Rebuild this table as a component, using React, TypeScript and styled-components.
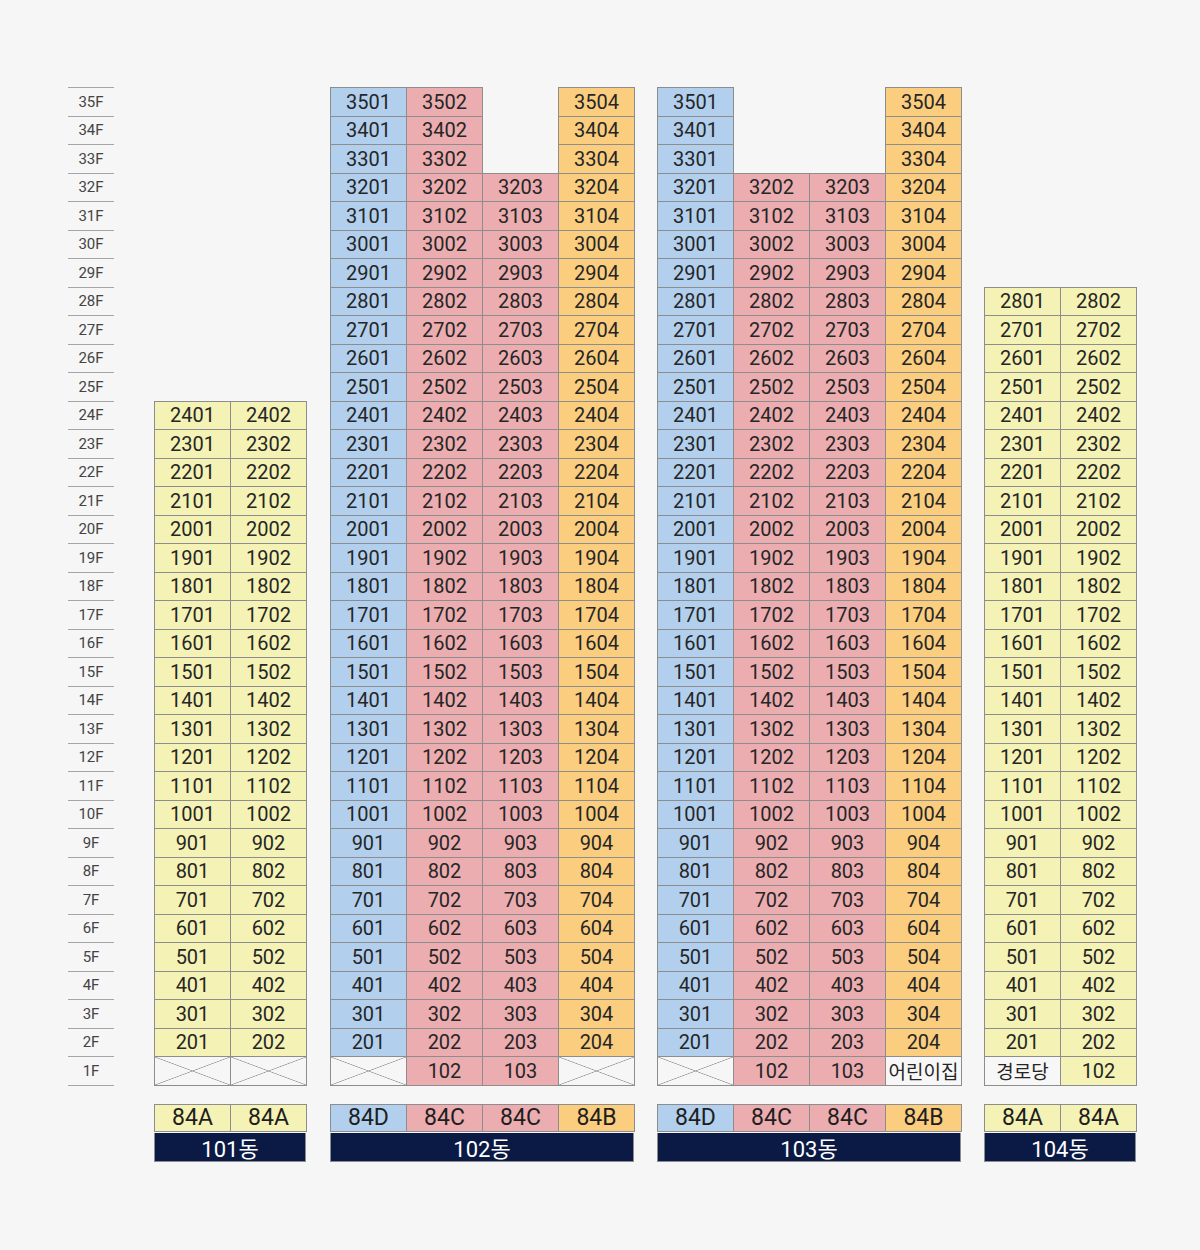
import styled, { createGlobalStyle } from "styled-components";

const GlobalStyle = createGlobalStyle`
  body {
    margin: 0;
    background: #f6f6f6;
    font-family: Roboto, "Noto Sans CJK KR", sans-serif;
  }
`;

const ROW = 28.5;
const COL = 76;
const TOP = 35;

const colors: Record<string, string> = {
  blue: "#b2d0ee",
  pink: "#ebadb0",
  orange: "#fbcd7f",
  yellow: "#f4f2b4",
};

const Page = styled.div`
  width: 1200px;
  height: 1250px;
  box-sizing: border-box;
  padding: 87px 0 0 68px;
  display: flex;
  align-items: flex-start;
`;

const FloorColumn = styled.div`
  width: 46px;
  margin-right: 40px;
  display: flex;
  flex-direction: column;
  border-bottom: 1px solid #a5a5a5;
`;

const FloorLabel = styled.div`
  height: ${ROW}px;
  box-sizing: border-box;
  border-top: 1px solid #a5a5a5;
  display: flex;
  align-items: center;
  justify-content: center;
  font-size: 15px;
  color: #444;
`;

const Building = styled.div<{ $gap: number }>`
  display: flex;
  flex-direction: column;
  margin-right: ${(p) => p.$gap}px;
`;

const Grid = styled.div<{ $cols: number }>`
  display: grid;
  grid-template-columns: repeat(${(p) => p.$cols}, ${COL}px);
  grid-auto-rows: ${ROW}px;
`;

const Cell = styled.div<{ $bg: string }>`
  margin: 0 -1px -1px 0;
  border: 1px solid #8d8d8d;
  background: ${(p) => p.$bg};
  display: flex;
  align-items: center;
  justify-content: center;
  font-size: 20px;
  color: #262626;
`;

const Empty = styled.div``;

const LabelCell = styled(Cell)`
  font-size: 19px;
`;

const Crossed = styled(Cell)`
  background:
    linear-gradient(to top right, transparent calc(50% - 0.7px), #9a9a9a 50%, transparent calc(50% + 0.7px)),
    linear-gradient(to bottom right, transparent calc(50% - 0.7px), #9a9a9a 50%, transparent calc(50% + 0.7px)),
    #f6f6f6;
`;

const Footer = styled.div`
  margin-top: 19px;
  display: flex;
  flex-direction: column;
`;

const TypeCell = styled(Cell)`
  height: 28px;
  box-sizing: border-box;
  font-size: 23px;
  color: #1e1e1e;
`;

const NameBar = styled.div`
  margin-top: 1px;
  height: 29px;
  box-sizing: border-box;
  border: 1px solid #8d8d8d;
  border-top: none;
  background: #0a1a45;
  color: #fff;
  font-size: 22px;
  display: flex;
  align-items: center;
  justify-content: center;
`;

type Column = {
  color: string;
  top: number;
  first: string | null; // 1F: null = crossed out, "unit" = number, else a label
};

type BuildingData = {
  name: string;
  gap: number;
  types: string[];
  columns: Column[];
};

const buildings: BuildingData[] = [
  {
    name: "101동",
    gap: 24,
    types: ["84A", "84A"],
    columns: [
      { color: "yellow", top: 24, first: null },
      { color: "yellow", top: 24, first: null },
    ],
  },
  {
    name: "102동",
    gap: 23,
    types: ["84D", "84C", "84C", "84B"],
    columns: [
      { color: "blue", top: 35, first: null },
      { color: "pink", top: 35, first: "unit" },
      { color: "pink", top: 32, first: "unit" },
      { color: "orange", top: 35, first: null },
    ],
  },
  {
    name: "103동",
    gap: 23,
    types: ["84D", "84C", "84C", "84B"],
    columns: [
      { color: "blue", top: 35, first: null },
      { color: "pink", top: 32, first: "unit" },
      { color: "pink", top: 32, first: "unit" },
      { color: "orange", top: 35, first: "어린이집" },
    ],
  },
  {
    name: "104동",
    gap: 0,
    types: ["84A", "84A"],
    columns: [
      { color: "yellow", top: 28, first: "경로당" },
      { color: "yellow", top: 28, first: "unit" },
    ],
  },
];

const floors = Array.from({ length: TOP }, (_, i) => TOP - i);

const renderCell = (col: Column, idx: number, floor: number) => {
  const key = `${floor}-${idx}`;
  if (floor > col.top) return <Empty key={key} />;
  if (floor === 1) {
    if (col.first === null) return <Crossed key={key} $bg="#f6f6f6" />;
    if (col.first !== "unit")
      return (
        <LabelCell key={key} $bg="#f7f7f7">
          {col.first}
        </LabelCell>
      );
  }
  return (
    <Cell key={key} $bg={colors[col.color]}>
      {floor * 100 + idx + 1}
    </Cell>
  );
};

export default function App() {
  return (
    <>
      <GlobalStyle />
      <Page>
        <FloorColumn>
          {floors.map((f) => (
            <FloorLabel key={f}>{f}F</FloorLabel>
          ))}
        </FloorColumn>
        {buildings.map((b) => (
          <Building key={b.name} $gap={b.gap}>
            <Grid $cols={b.columns.length}>
              {floors.map((f) => b.columns.map((c, i) => renderCell(c, i, f)))}
            </Grid>
            <Footer>
              <Grid $cols={b.columns.length}>
                {b.types.map((t, i) => (
                  <TypeCell key={i} $bg={colors[b.columns[i].color]}>
                    {t}
                  </TypeCell>
                ))}
              </Grid>
              <NameBar>{b.name}</NameBar>
            </Footer>
          </Building>
        ))}
      </Page>
    </>
  );
}
